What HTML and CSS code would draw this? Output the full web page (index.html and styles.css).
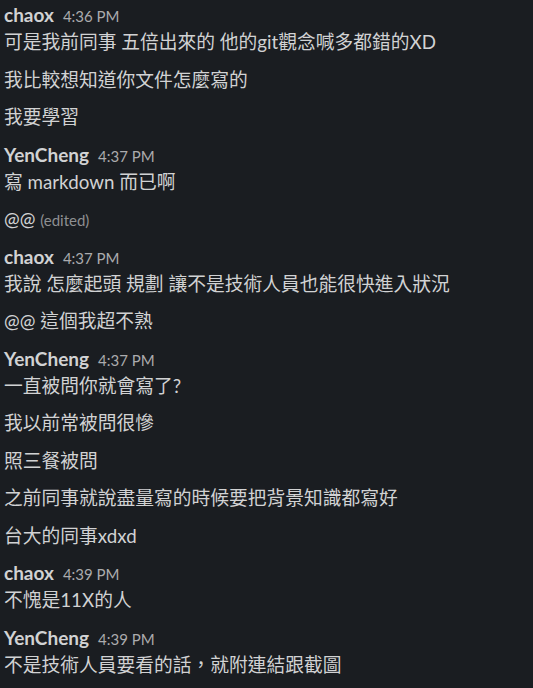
FILE: index.html
```html
<!DOCTYPE html>
<html lang="zh-Hant">
<head>
<meta charset="utf-8">
<link rel="stylesheet" href="styles.css">
</head>
<body>
<div class="chat">
  <div class="group">
    <div class="head"><span class="name">chaox</span><span class="time">4:36 PM</span></div>
    <div class="msg">可是我前同事 五倍出來的 他的git觀念喊多都錯的XD</div>
    <div class="msg">我比較想知道你文件怎麼寫的</div>
    <div class="msg">我要學習</div>
  </div>
  <div class="group">
    <div class="head"><span class="name">YenCheng</span><span class="time">4:37 PM</span></div>
    <div class="msg">寫 markdown 而已啊</div>
    <div class="msg">@@ <span class="edited">(edited)</span></div>
  </div>
  <div class="group">
    <div class="head"><span class="name">chaox</span><span class="time">4:37 PM</span></div>
    <div class="msg">我說 怎麼起頭 規劃 讓不是技術人員也能很快進入狀況</div>
    <div class="msg">@@ 這個我超不熟</div>
  </div>
  <div class="group">
    <div class="head"><span class="name">YenCheng</span><span class="time">4:37 PM</span></div>
    <div class="msg">一直被問你就會寫了?</div>
    <div class="msg">我以前常被問很慘</div>
    <div class="msg">照三餐被問</div>
    <div class="msg">之前同事就說盡量寫的時候要把背景知識都寫好</div>
    <div class="msg">台大的同事xdxd</div>
  </div>
  <div class="group">
    <div class="head"><span class="name">chaox</span><span class="time">4:39 PM</span></div>
    <div class="msg">不愧是11X的人</div>
  </div>
  <div class="group">
    <div class="head"><span class="name">YenCheng</span><span class="time">4:39 PM</span></div>
    <div class="msg">不是技術人員要看的話，就附連結跟截圖</div>
  </div>
</div>
</body>
</html>
```
FILE: styles.css
```css
html, body {
  margin: 0;
  padding: 0;
  background: #1a1d21;
}
body {
  width: 533px;
  height: 688px;
  overflow: hidden;
  font-family: Lato, "Noto Sans CJK TC", sans-serif;
  color: #d1d2d3;
}
.chat {
  display: flex;
  flex-direction: column;
  padding: 4px 0 0 4px;
}
.group {
  display: flex;
  flex-direction: column;
}
.head {
  display: flex;
  align-items: baseline;
  gap: 9px;
  height: 22px;
  line-height: 22px;
  margin-bottom: 5px;
}
.name {
  font-weight: 700;
  font-size: 19px;
  color: #d1d2d3;
}
.time {
  font-size: 15px;
  color: #ababad;
}
.msg {
  font-size: 18.75px;
  height: 22.5px;
  line-height: 22.5px;
  margin-bottom: 15px;
  white-space: nowrap;
}
.edited {
  font-size: 15px;
  color: #8e8f91;
}
```
